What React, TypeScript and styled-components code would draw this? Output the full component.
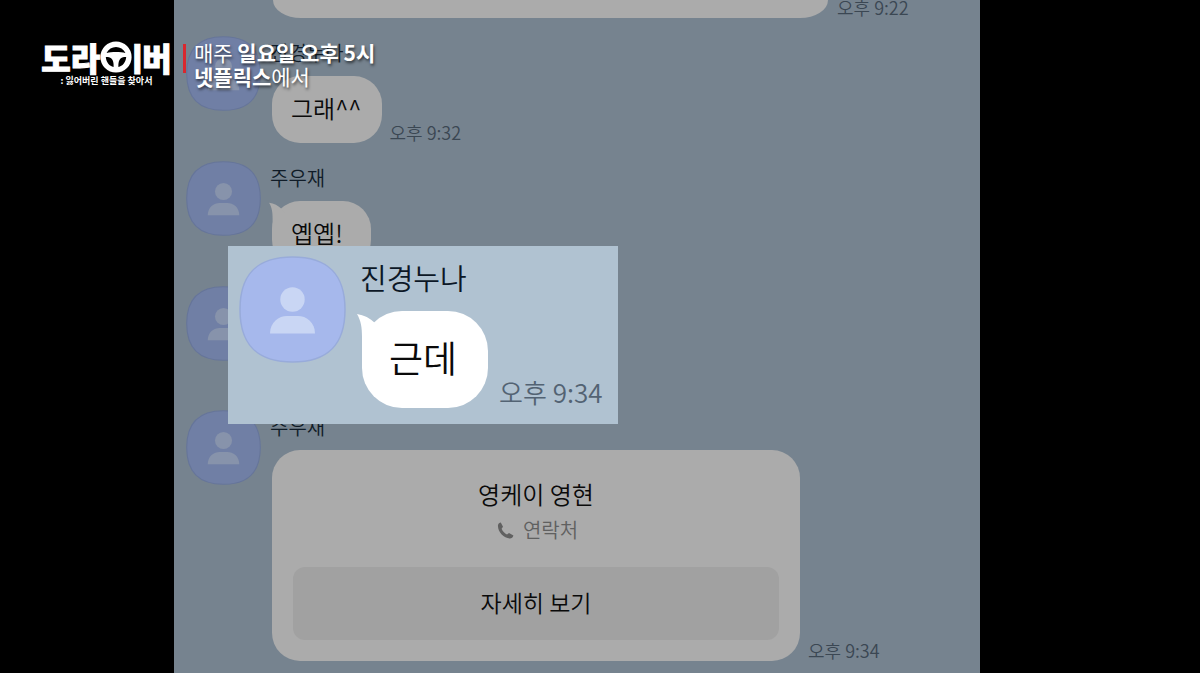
import React from "react";
import styled, { createGlobalStyle, css } from "styled-components";

const Global = createGlobalStyle`
  * { box-sizing: border-box; }
  html, body { margin: 0; background: #000; }
  body { font-family: "Noto Sans CJK KR", "Noto Sans", sans-serif; overflow: hidden; }
`;

const Stage = styled.div`
  position: relative;
  display: grid;
  grid-template-columns: 174fr 806fr 220fr;
  height: 100vh;
  overflow: hidden;
  background: #000;
`;

const Chat = styled.main`
  grid-column: 2;
  position: relative;
  min-width: 0;
  height: 100vh;
  overflow: hidden;
  background: #76838f;
  font-weight: 350;
`;

const Thread = styled.div`
  display: flex;
  flex-direction: column;
  gap: 18px;
  padding-left: 12px;
`;

const EarlierRow = styled.div`
  display: flex;
  align-items: flex-end;
  gap: 9px;
  height: 18px;
  padding-left: 87px;
`;

const EarlierBubble = styled.div`
  width: 555px;
  height: 18px;
  border-radius: 0 0 28px 28px / 0 0 18px 18px;
  background: #ababab;
`;

const Row = styled.article<{ $large?: boolean }>`
  display: flex;
  align-items: flex-start;
  gap: ${(p) => (p.$large ? 16 : 11)}px;
`;

/* A row whose message lies wholly behind the highlighted one. */
const CoveredRow = styled(Row)`
  height: 106px;
`;

const AvatarSvg = styled.svg<{ $large?: boolean }>`
  flex: none;
  display: block;
  width: ${(p) => (p.$large ? 107 : 75)}px;
  height: ${(p) => (p.$large ? 107 : 75)}px;
`;

const Name = styled.div<{ $large?: boolean }>`
  height: ${(p) => (p.$large ? 55 : 40)}px;
  font-size: ${(p) => (p.$large ? 29 : 20)}px;
  line-height: ${(p) => (p.$large ? 42 : 34)}px;
  color: ${(p) => (p.$large ? "#0c1726" : "#101c28")};
  margin-left: -2px;
`;

const Line = styled.div<{ $large?: boolean }>`
  display: flex;
  align-items: flex-end;
  gap: ${(p) => (p.$large ? 11 : 8)}px;
`;

const Bubble = styled.div<{ $large?: boolean }>`
  position: relative;
  min-width: 99px;
  height: 67px;
  padding: 14px 20px 0 19px;
  border-radius: 28px;
  background: #ababab;
  color: #0a0a0a;
  font-size: 24px;
  line-height: 36px;
  ${(p) =>
    p.$large &&
    css`
      min-width: 126px;
      height: 97px;
      padding: 19px 28px 0 27px;
      border-radius: 40px;
      background: #fff;
      font-size: 37px;
      line-height: 54px;
    `}
`;

const TailSvg = styled.svg<{ $large?: boolean }>`
  position: absolute;
  left: ${(p) => (p.$large ? -5 : -3)}px;
  top: ${(p) => (p.$large ? 2 : 1)}px;
  width: ${(p) => (p.$large ? 24 : 17)}px;
  height: ${(p) => (p.$large ? 40 : 28)}px;
`;

const Time = styled.time<{ $large?: boolean }>`
  padding-bottom: 1px;
  font-size: ${(p) => (p.$large ? 26 : 18)}px;
  line-height: ${(p) => (p.$large ? 30 : 20)}px;
  white-space: nowrap;
  color: ${(p) => (p.$large ? "#536373" : "#3b4753")};
`;

const Card = styled.section`
  display: flex;
  flex-direction: column;
  align-items: center;
  width: 528px;
  height: 211px;
  padding: 26px 21px 21px;
  border-radius: 28px;
  background: #ababab;
`;

const CardTitle = styled.h2`
  margin: 0;
  font-size: 24px;
  line-height: 36px;
  font-weight: inherit;
  color: #0a0a0a;
`;

const CardKind = styled.div`
  display: flex;
  align-items: center;
  gap: 9px;
  padding-left: 3px;
  font-size: 20px;
  line-height: 36px;
  color: #606060;
`;

const DetailButton = styled.button`
  width: 100%;
  height: 73px;
  margin-top: auto;
  padding: 0 0 4px;
  border: 0;
  border-radius: 12px;
  background: #a1a1a1;
  color: #0a0a0a;
  font: inherit;
  font-size: 23px;
`;

const Highlight = styled.section`
  position: absolute;
  left: 54px;
  top: 246px;
  width: 390px;
  height: 178px;
  padding: 10px 11px;
  background: #b0c2d1;
`;

const Banner = styled.header`
  position: absolute;
  left: 41px;
  top: 39px;
  display: flex;
  align-items: flex-start;
  color: #fff;
`;

const Logo = styled.div`
  display: flex;
  flex-direction: column;
  align-items: center;
  width: 131px;
`;

const LogoWord = styled.h1`
  display: flex;
  align-items: center;
  margin: 0;
  height: 35px;
  font-size: 32px;
  line-height: 36px;
  font-weight: 900;
  white-space: nowrap;
  -webkit-text-stroke: 1px #fff;
`;

/* The vowel stands tight against the wheel, which takes the place of its circle. */
const Vowel = styled.span`
  display: flex;
  justify-content: center;
  width: 10px;
`;

const WheelSvg = styled.svg`
  flex: none;
  width: 32px;
  height: 32px;
`;

const LogoSub = styled.p`
  margin: 0;
  font-size: 9px;
  line-height: 14px;
  font-weight: 700;
  white-space: nowrap;
`;

const RedBar = styled.span`
  width: 3px;
  height: 29px;
  margin: 5px 8px 0 11px;
  background: #d9272e;
`;

const Schedule = styled.p`
  margin: 1px 0 0;
  font-size: 21px;
  line-height: 24px;
  font-weight: 400;
  white-space: nowrap;
  text-shadow: 1px 2px 3px rgba(0, 0, 0, 0.6);
  b { font-weight: 700; }
`;

type Sized = { large?: boolean };

const Avatar = ({ large }: Sized) => (
  <AvatarSvg $large={large} viewBox="0 0 107 107" aria-hidden="true">
    <path
      d="M53.5 1C89 1 106 18 106 53.5S89 106 53.5 106 1 89 1 53.5 18 1 53.5 1Z"
      fill={large ? "#a6b8ec" : "#707fa5"}
      stroke={large ? "#98abda" : "#667599"}
      strokeWidth="1.5"
    />
    <circle cx="53.5" cy="43.5" r="12.2" fill={large ? "#c9d6f4" : "#8793ab"} />
    <path
      d="M31 77.5C31 66 40 60 48 60H59C67 60 76 66 76 77.5Z"
      fill={large ? "#c9d6f4" : "#8793ab"}
    />
  </AvatarSvg>
);

const Tail = ({ large }: Sized) => (
  <TailSvg $large={large} viewBox="0 0 24 40" aria-hidden="true">
    <path d="M0 1C7 2 13 5 18 10L24 16V40H5V24C5 14 4 8 0 1Z" fill={large ? "#fff" : "#ababab"} />
  </TailSvg>
);

type MessageProps = { name: string; text: string; time?: string; large?: boolean; tail?: boolean };

const Message = ({ name, text, time, large, tail = true }: MessageProps) => (
  <Row $large={large}>
    <Avatar large={large} />
    <div>
      <Name $large={large}>{name}</Name>
      <Line $large={large}>
        <Bubble $large={large}>
          {tail && <Tail large={large} />}
          {text}
        </Bubble>
        {time && <Time $large={large}>{time}</Time>}
      </Line>
    </div>
  </Row>
);

const Wheel = () => (
  <WheelSvg viewBox="0 0 32 32" aria-hidden="true">
    <circle cx="16" cy="16" r="15.6" fill="#fff" />
    <path d="M6.500 12C8.500 8 12 6 16 6S23.500 8 25.500 12C22.500 11.400 20 11 16 11S9.500 11.400 6.500 12Z" fill="#000" />
    <path d="M5.800 16C9 16 11 16.500 12.200 18.500 13.500 20.500 13.800 23 13.600 26 9.500 25.200 6.200 21.500 5.800 16Z" fill="#000" />
    <path d="M26.200 16C23 16 21 16.500 19.800 18.500 18.500 20.500 18.200 23 18.400 26 22.500 25.200 25.800 21.500 26.200 16Z" fill="#000" />
  </WheelSvg>
);

const Phone = () => (
  <svg width="17" height="17" viewBox="0 0 17 17" aria-hidden="true">
    <path
      d="M1 3.2C1.2 1.8 2.6.6 3.8.6L6 4.8 4.6 6.7C5.4 9 7.6 11.4 10 12.4L12 11 16.4 13.4C16 15.2 14.6 16.4 12.8 16.4 6.6 16.4.4 9.4 1 3.2Z"
      fill="#606060"
    />
  </svg>
);

export default function App() {
  return (
    <Stage>
      <Global />
      <Chat>
        <Thread>
          <EarlierRow>
            <EarlierBubble />
            <Time>오후 9:22</Time>
          </EarlierRow>
          <Message name="진경누나" text="그래^^" time="오후 9:32" tail={false} />
          <Message name="주우재" text="옙옙!" />
          <CoveredRow>
            <Avatar />
          </CoveredRow>
          <Row>
            <Avatar />
            <div>
              <Name>주우재</Name>
              <Line>
                <Card>
                  <CardTitle>영케이 영현</CardTitle>
                  <CardKind>
                    <Phone />
                    연락처
                  </CardKind>
                  <DetailButton type="button">자세히 보기</DetailButton>
                </Card>
                <Time>오후 9:34</Time>
              </Line>
            </div>
          </Row>
        </Thread>
        <Highlight>
          <Message name="진경누나" text="근데" time="오후 9:34" large />
        </Highlight>
      </Chat>
      <Banner>
        <Logo>
          <LogoWord>
            도라
            <Wheel />
            <Vowel>ㅣ</Vowel>
            버
          </LogoWord>
          <LogoSub>: 잃어버린 핸들을 찾아서</LogoSub>
        </Logo>
        <RedBar />
        <Schedule>
          매주 <b>일요일 오후 5시</b>
          <br />
          <b>넷플릭스</b>에서
        </Schedule>
      </Banner>
    </Stage>
  );
}
